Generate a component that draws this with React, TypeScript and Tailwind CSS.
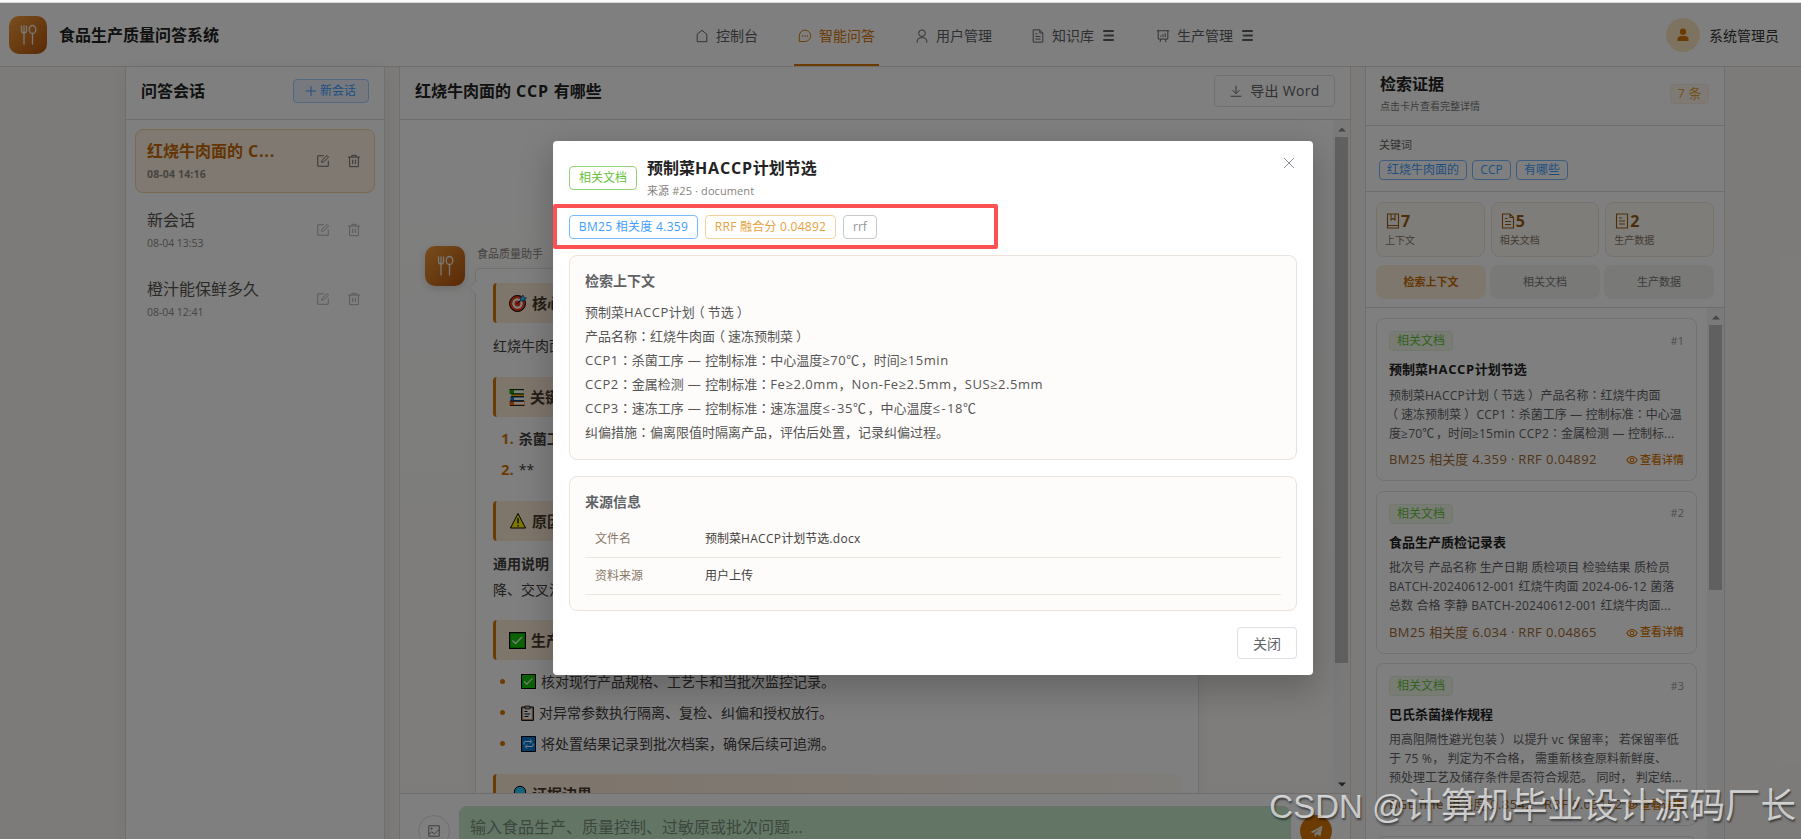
import React from "react";

function Ico({ children, s = 14, c = "" }: { children: React.ReactNode; s?: number; c?: string }) {
  return (
    <svg width={s} height={s} viewBox="0 0 16 16" fill="none" stroke="currentColor" strokeWidth="1.1" className={"shrink-0 " + c}>
      {children}
    </svg>
  );
}

const HouseIcon = () => <Ico><path d="M2.500 14.500V6L8 1.500 13.500 6v8.500z" /></Ico>;
const ChatIcon = () => (
  <Ico><path d="M1.500 14.300V8A6.500 6.500 0 1 1 8 14.300z" /><path d="M4.700 8h1.200M7.400 8h1.200M10.100 8h1.200" strokeWidth="1.500" /></Ico>
);
const UserIcon = () => <Ico><circle cx="8" cy="4.800" r="3.800" /><path d="M2.500 15.500v-2a4 4 0 0 1 4-3.500h3a4 4 0 0 1 4 3.500v2" /></Ico>;
const DocIcon = ({ s = 14 }: { s?: number }) => (
  <Ico s={s}><path d="M2.500 1h7.500l3.500 3.500V15h-11zM10 1v3.500h3.500M5 5.500h2.500M5 8.500h6M5 11.500h6" /></Ico>
);
const ListIcon = ({ s = 14 }: { s?: number }) => (
  <Ico s={s}><path d="M2.500 1h11v14h-11zM5 5h3M5 8h6M5 11h6" /></Ico>
);
const BookIcon = () => <Ico s={16}><path d="M2.500 1h11v14h-11zM2.500 12.500h11M6 1v6l2-1.500L10 7V1" /></Ico>;
const BoardIcon = () => <Ico><path d="M1 2h14M2.500 2v9.500h11V2M5.500 11.500 4.500 15M10.500 11.500l1 3.500M5.500 9V7.500M8 9V6M10.500 9V5" /></Ico>;
const FoldIcon = () => (
  <Ico s={13} c="ml-[1px]"><path d="M1.500 2.500h13M5 8h9.500M1.500 13.500h13" strokeWidth="2.500" /><path d="M1.500 8l3-2v4z" fill="currentColor" stroke="none" /></Ico>
);
const EditIcon = () => <Ico><path d="M9 2H2v12h12V7.500M6.500 9.500l.4-2.200L12.500 1.700l1.800 1.800-5.600 5.600z" /></Ico>;
const TrashIcon = () => <Ico><path d="M1 3.500h14M3 3.500V14.500h10V3.500M5.500 3.500v-2h5v2M6.500 6.500v5M9.500 6.500v5" /></Ico>;
const DownIcon = () => <Ico><path d="M2 14h12M8 2v8.500M4 7l4 4 4-4" /></Ico>;
const EyeIcon = () => <Ico s={12}><path d="M1 8c2-3.300 4.300-4.800 7-4.800S13 4.700 15 8c-2 3.300-4.300 4.800-7 4.800S3 11.300 1 8z" strokeWidth="1.400" /><circle cx="8" cy="8" r="2.400" strokeWidth="1.400" /></Ico>;
const ImageIcon = () => <Ico><path d="M2 2h12v12H2zM2 11.500l3.500-2.500 3 2.500 5.500-5.500" /><circle cx="5.200" cy="5.200" r=".8" /></Ico>;

// Spaces Latin runs and centres full-width colons and brackets in their em box.
function T({ children, k = "tracking-[0.55px]" }: { children: string; k?: string }) {
  return (
    <>
      {children.split(/([：（）℃]|≤-|[\x20-\x7e—≥≤]+)/).map((p, i) => {
        if (p === "：") return <span key={i} className="font-['Noto_Sans_CJK_TC']">{p}</span>;
        if (p === "（") return <span key={i} className="-ml-[3px] mr-[3px]">{p}</span>;
        if (p === "）") return <span key={i} className="mr-[-3px] ml-[3px]">{p}</span>;
        if (p === "℃") return <span key={i} className="mr-[1.500px]">{p}</span>;
        if (p === "≤-") return <span key={i} className="tracking-[1.500px]">{p}</span>;
        if (/^[\x20-\x7e—≥≤]+$/.test(p)) return <span key={i} className={k}>{p}</span>;
        return <React.Fragment key={i}>{p}</React.Fragment>;
      })}
    </>
  );
}

function Utensils() {
  return (
    <svg width="19" height="22" viewBox="0 0 19 22" fill="none" stroke="#f5f0e8" strokeWidth="1.300" strokeLinecap="round">
      <path d="M2.500 2v4.500a2.500 2.500 0 0 0 5 0V2M5 2v18" />
      <ellipse cx="13.500" cy="5.500" rx="3.300" ry="4" />
      <path d="M13.500 9.500V20" />
    </svg>
  );
}

function Target() {
  return (
    <svg width="18" height="18" viewBox="0 0 18 18" className="shrink-0">
      <circle cx="8.500" cy="9.500" r="8" fill="#f03a17" stroke="#000" />
      <circle cx="8.500" cy="9.500" r="5.200" fill="#fff" />
      <circle cx="8.500" cy="9.500" r="3" fill="#f03a17" />
      <path d="M8.500 9.500 12 6" stroke="#000" />
      <path d="m11 7 .5-3L14 1l1 2.500 2.500.5-3 3z" fill="#26c6f5" stroke="#116" strokeWidth=".6" />
    </svg>
  );
}
function Books() {
  return (
    <svg width="16" height="17" viewBox="0 0 16 17" className="shrink-0">
      <path d="M.5.500h14v4.500H.5z" fill="#16a30c" /><path d="M5 1.300h9.500v3H5z" fill="#fff" />
      <path d="M2.500 5h12.500v2.500H2.500z" fill="#ffb900" />
      <path d="M1.500 7.500h13.500V12H1.500z" fill="#0078d7" /><path d="M5 8.500h10v2.500H5z" fill="#fff" />
      <path d="M.5 12h15v4.500H.5z" fill="#f7630c" /><path d="M5 13h10v2.500H5z" fill="#fff" />
      <path d="M.5.500h14.500M2 5h13M2 7.600h13M1 12h14M1 16.500h14.500" stroke="#000" strokeWidth=".8" />
    </svg>
  );
}
function Warn() {
  return (
    <svg width="18" height="18" viewBox="0 0 18 18" className="shrink-0">
      <path d="M9 1.500 16.500 16h-15z" fill="#fff100" stroke="#000" /><path d="M9 6v5.500M9 13v1.500" stroke="#000" strokeWidth="1.300" />
    </svg>
  );
}
function Check({ s = 17 }: { s?: number }) {
  return (
    <svg width={s} height={s} viewBox="0 0 17 17" className="shrink-0">
      <path d="M.6.6h15.800v15.800H.6z" fill="#16c60c" stroke="#000" strokeWidth="1.200" /><path d="m3.500 8.500 3 3L13 5" fill="none" stroke="#fff" strokeWidth="1.300" />
    </svg>
  );
}
function Clip() {
  return (
    <svg width="13" height="16" viewBox="0 0 13 16" className="shrink-0">
      <path d="M.6 2h11.800v13.400H.6z" fill="#d29a72" stroke="#000" /><path d="M2.300 3.500h8.400v10.500H2.300z" fill="#fff" />
      <path d="M4 1h5v3H4z" fill="#aaa" stroke="#000" strokeWidth=".7" /><path d="M3.500 6.500h3M3.500 9h5.500M3.500 11.500h4" stroke="#000" />
    </svg>
  );
}
function Repeat() {
  return (
    <svg width="15" height="16" viewBox="0 0 15 16" className="shrink-0">
      <path d="M.5.500h14v15H.5z" fill="#0078d7" stroke="#000" />
      <path d="M3 8.500V6.500q0-1 1-1h6M9 3.500l2 2-2 2M12 7.500v2q0 1-1 1H5M6 8.500l-2 2 2 2" fill="none" stroke="#fff" />
    </svg>
  );
}
function Magnifier() {
  return (
    <svg width="18" height="18" viewBox="0 0 18 18" className="shrink-0">
      <circle cx="11" cy="7" r="5.700" fill="#26c6f5" stroke="#000" /><path d="m6.500 11.500-5 5" stroke="#000" strokeWidth="2" />
    </svg>
  );
}

function NavItem({ icon, label, c, fold, active }: { icon: React.ReactNode; label: string; c: string; fold?: boolean; active?: boolean }) {
  return (
    <div className={"flex h-[63px] items-center gap-[7px] border-b-2 pt-[4px] text-sm " + c + (active ? " border-[#d97706] px-1 text-[#d97706]" : " border-transparent px-[3px] text-[#5c5f66]")}>
      {icon}
      <span className="leading-none">{label}</span>
      {fold && <FoldIcon />}
    </div>
  );
}

function Session({ title, date, active }: { title: string; date: string; active?: boolean }) {
  return (
    <div className={"mb-[5px] flex h-16 items-center rounded-lg border pr-[13px] pl-[11px] " + (active ? "border-[#f3d3a0] bg-[#fff3e2] font-bold" : "border-transparent")}>
      <div className="flex-1">
        <div className={"text-base leading-[22px] " + (active ? "text-[#c96a05]" : "text-[#57534e]")}><T k={active ? "tracking-[0.8px]" : ""}>{title}</T></div>
        <div className={"mt-[4px] text-[10.500px] leading-4 text-[#8f8a83] " + (active ? "tracking-[0.150px]" : "tracking-[-0.050px]")}>{date}</div>
      </div>
      <div className={"flex gap-[17px] " + (active ? "text-[#666]" : "text-[#b0b0b0]")}>
        <EditIcon />
        <TrashIcon />
      </div>
    </div>
  );
}

function Heading({ icon, children }: { icon: React.ReactNode; children: React.ReactNode }) {
  return (
    <div className="flex h-10 shrink-0 items-center rounded-[4px] border-l-[3px] border-[#d97706] bg-linear-to-r from-[#fdebd6] to-[#fffaf4] pl-[13px] text-[15px] font-bold text-[#4a3b2c]">
      {icon}
      <span className="ml-[5px]">{children}</span>
    </div>
  );
}

function Bullet({ icon, children }: { icon: React.ReactNode; children: React.ReactNode }) {
  return (
    <div className="flex h-[31px] items-center pl-[7px] text-sm text-[#44403c]">
      <span className="size-[5px] rounded-full bg-[#d97706]" />
      <span className="flex items-center gap-[5px] pl-[16px]">{icon}<span>{children}</span></span>
    </div>
  );
}

function Arrow({ up, c }: { up?: boolean; c: string }) {
  return (
    <svg width="8" height="5" viewBox="0 0 8 5" className={c}>
      <path d={up ? "M0 4.500 4 .5l4 4z" : "M0 .5l4 4 4-4z"} fill="currentColor" />
    </svg>
  );
}

function Stat({ icon, n, label }: { icon: React.ReactNode; n: string; label: string }) {
  return (
    <div className="h-[55px] rounded-lg border border-[#efe7d8] bg-[#fdfbf5] px-2 pt-[8px] text-[#9a5b13]">
      <div className="flex h-[20px] items-center text-base font-bold">{icon}<span>{n}</span></div>
      <div className="text-[10px] leading-[19px] text-[#8a7563]">{label}</div>
    </div>
  );
}

function Evidence({ n, title, lines, score }: { n: number; title: string; lines: string[]; score: string }) {
  return (
    <div className="mb-[9.600px] h-[163px] shrink-0 rounded-lg border border-[#e5e2dc] px-[12px] pt-3">
      <div className="flex h-5 items-center justify-between">
        <span className="flex h-5 items-center rounded border border-[#e1f3d8] bg-[#f0f9eb] px-[7px] text-xs text-[#67c23a]">相关文档</span>
        <span className="text-[11px] text-[#999]">#{n}</span>
      </div>
      <div className="mt-[8px] h-5 text-[13px] leading-5 font-bold text-[#222]"><T k="tracking-[0.6px]">{title}</T></div>
      <div className="mt-[6px] text-xs leading-[19px] whitespace-pre text-[#5f6166]">
        {lines.map((l) => <div key={l} className="h-[19px]"><T k="tracking-[0.25px]">{l}</T></div>)}
      </div>
      <div className="mt-[8px] flex h-5 items-center justify-between">
        <span className="text-[13px] text-[#a16a32]"><T k="tracking-[0.4px]">{score}</T></span>
        <span className="flex items-center gap-[2px] text-[11px] font-medium text-[#d97706]"><EyeIcon />查看详情</span>
      </div>
    </div>
  );
}

function Page() {
  return (
    <div className="flex h-[836px] flex-col bg-[#f9f7f3]">
      <header className="flex h-[64px] shrink-0 items-center border-b border-[#e0ddd8] bg-white pl-[9px]">
        <div className="flex size-[38px] items-center justify-center rounded-[10px] bg-linear-to-br from-[#f59e3a] to-[#b45309]"><Utensils /></div>
        <div className="ml-[12px] w-[633px] pt-px text-base font-bold text-[#222]">食品生产质量问答系统</div>
        <NavItem c="" icon={<HouseIcon />} label="控制台" />
        <NavItem c="ml-[33px]" icon={<ChatIcon />} label="智能问答" active />
        <NavItem c="ml-[33px]" icon={<UserIcon />} label="用户管理" />
        <NavItem c="ml-[33px]" icon={<DocIcon />} label="知识库" fold />
        <NavItem c="ml-[35px]" icon={<BoardIcon />} label="生产管理" fold />
        <div className="ml-auto flex size-[34px] items-center justify-center rounded-full bg-[#fde7c3] text-[#d97706]">
          <svg width="12" height="14" viewBox="0 0 12 14" fill="currentColor"><circle cx="6" cy="3.700" r="3.200" /><path d="M.5 13v-2.500a3 3 0 0 1 3-2.500h5a3 3 0 0 1 3 2.500V13z" /></svg>
        </div>
        <div className="mr-[22px] ml-[9px] pt-[2px] text-sm text-[#333]">系统管理员</div>
      </header>

      <div className="flex min-h-0 flex-1 justify-start pl-[125px]">
        <aside className="w-[260px] shrink-0 border-x border-[#e2dfda] bg-white shadow-[0_4px_18px_rgba(60,40,10,0.080)]">
          <div className="flex h-[53px] items-center justify-between border-b border-[#dedbd6] pr-[15px] pb-[4px] pl-[15px]">
            <span className="text-base font-bold text-[#222]">问答会话</span>
            <span className="flex h-6 w-[76px] items-center justify-center gap-[4px] rounded border border-[#a0cfff] bg-[#ecf5ff] text-xs text-[#409eff]">
              <svg width="10" height="10" viewBox="0 0 10 10" stroke="currentColor"><path d="M5 0v10M0 5h10" /></svg>新会话
            </span>
          </div>
          <div className="pt-[9px] pr-[9px] pl-[9px]">
            <Session title="红烧牛肉面的 C..." date="08-04 14:16" active />
            <Session title="新会话" date="08-04 13:53" />
            <Session title="橙汁能保鲜多久" date="08-04 12:41" />
          </div>
        </aside>

        <main className="ml-[14px] flex w-[952px] shrink-0 flex-col border-x border-[#e2dfda] bg-white">
          <div className="flex h-[53px] shrink-0 items-center justify-between border-b border-[#dedbd6] pr-[15px] pb-[4px] pl-[15px]">
            <span className="text-base font-bold text-[#222]"><T k="tracking-[0.8px]">红烧牛肉面的 CCP 有哪些</T></span>
            <span className="flex h-8 w-[121px] items-center justify-center gap-[7px] rounded border border-[#dcdfe6] text-sm text-[#606266]"><DownIcon /><span className="tracking-[0.300px]">导出 Word</span></span>
          </div>
          <div className="flex h-[673px] shrink-0 overflow-hidden">
            <div className="flex flex-1 bg-linear-to-b from-white to-[#fbf9f5] pt-[126px] pl-[25px]">
              <div className="flex size-10 shrink-0 items-center justify-center rounded-[10px] bg-linear-to-br from-[#f09a38] to-[#b45309] shadow-[0_3px_8px_rgba(0,0,0,0.150)]"><Utensils /></div>
              <div className="ml-[10px]">
                <div className="ml-[2px] h-[22px] text-[11px] leading-4 text-[#8b857c]">食品质量助手</div>
                <div className="relative flex h-[600px] w-[724px] flex-col rounded border border-[#e6e2dc] bg-white pt-[14px] pr-[17px] pl-[17px] shadow-[0_4px_14px_rgba(0,0,0,0.050)]">
                  <svg width="9" height="18" viewBox="0 0 9 18" className="absolute top-[10px] left-[-8.500px]"><path d="M9 1 1 8.500l8 8" fill="#fff" stroke="#e6e2dc" /></svg>
                  <Heading icon={<Target />}>核心结论</Heading>
                  <div className="mt-[12px] h-[42px] text-sm leading-[22px] text-[#44403c]">红烧牛肉面的关键控制点如下</div>
                  <Heading icon={<Books />}>关键依据</Heading>
                  <div className="mt-[6px] ml-[8px] h-[31px] text-sm leading-[31px] text-[#44403c]"><b className="mr-[5px] text-[15px] text-[#d97706]">1.</b><b>杀菌工序</b></div>
                  <div className="mb-px ml-[8px] h-[46px] text-sm leading-[31px] text-[#44403c]"><b className="mr-[5px] text-[15px] text-[#d97706]">2.</b>**</div>
                  <Heading icon={<Warn />}>原因分析</Heading>
                  <div className="mt-[10px] h-[69px] text-sm leading-[26px] text-[#44403c]"><div className="font-bold">通用说明</div><div>降、交叉污染</div></div>
                  <Heading icon={<Check />}>生产建议</Heading>
                  <div className="mt-[6px] h-[108px]">
                    <Bullet icon={<Check s={15} />}>核对现行产品规格、工艺卡和当批次监控记录。</Bullet>
                    <Bullet icon={<Clip />}>对异常参数执行隔离、复检、纠偏和授权放行。</Bullet>
                    <Bullet icon={<Repeat />}>将处置结果记录到批次档案，确保后续可追溯。</Bullet>
                  </div>
                  <Heading icon={<Magnifier />}>证据边界</Heading>
                </div>
              </div>
            </div>
            <div className="flex w-[17px] shrink-0 flex-col items-center bg-[#f5f5f5] pt-[7px] text-[#8a8a8a]">
              <Arrow up c="" />
              <div className="mt-[5px] h-[526px] w-[13px] bg-[#c1c1c1]" />
              <Arrow c="mt-auto mb-[6px] text-[#444]" />
            </div>
          </div>
          <div className="flex flex-1 overflow-hidden border-t border-[#dedbd6] pl-[18px]">
            <div className="mt-[21px] flex size-8 shrink-0 items-center justify-center rounded-full border border-[#dcdfe6] text-[#777]"><ImageIcon /></div>
            <div className="mt-[12px] ml-[9px] h-[60px] w-[832px] rounded-lg border border-[#d6dfd2] bg-[#c7edcc] pt-[8px] pl-[10px] text-base leading-6 text-[#78907c]">输入食品生产、质量控制、过敏原或批次问题...</div>
            <div className="mt-[21px] ml-[9px] flex size-8 shrink-0 items-center justify-center rounded-full bg-[#d97706]">
              <svg width="13" height="13" viewBox="0 0 13 13" fill="#f5efe6"><path d="M.5 7 12.500.5 10.500 11 6.500 9.300 5 12.500 4.300 8.700 10 3.500 3.400 8z" /></svg>
            </div>
          </div>
        </main>

        <aside className="ml-[14px] flex w-[360px] shrink-0 flex-col overflow-hidden border-x border-[#e2dfda] bg-white">
          <div className="flex h-[59px] shrink-0 justify-between border-b border-[#dedbd6] pr-[15px] pl-[14px]">
            <div className="pt-[5px]"><div className="text-base leading-6 font-bold text-[#222]">检索证据</div><div className="mt-[2px] text-[10px] leading-4 text-[#777]">点击卡片查看完整详情</div></div>
            <span className="mt-[17px] flex h-5 w-[39px] items-center justify-center rounded border border-[#faecd8] bg-[#fdf6ec] text-[13px] text-[#e6a23c]">7 条</span>
          </div>
          <div className="h-[66px] shrink-0 border-b border-[#dedbd6] pt-[11px] pl-[13px]">
            <div className="text-[11px] leading-4 text-[#666]">关键词</div>
            <div className="mt-[7px] flex gap-[5px] text-xs leading-[18px] text-[#409eff]">
              <span className="rounded border border-[#79bbff] px-[7px]">红烧牛肉面的</span>
              <span className="w-[39px] rounded border border-[#79bbff] text-center">CCP</span>
              <span className="rounded border border-[#79bbff] px-[7px]">有哪些</span>
            </div>
          </div>
          <div className="h-[116px] shrink-0 border-b border-[#dedbd6] pt-[10px] pr-[10px] pl-[10px]">
            <div className="grid grid-cols-3 gap-[6px]">
              <Stat icon={<BookIcon />} n="7" label="上下文" />
              <Stat icon={<DocIcon s={16} />} n="5" label="相关文档" />
              <Stat icon={<ListIcon s={16} />} n="2" label="生产数据" />
            </div>
            <div className="mt-2 grid grid-cols-3 gap-1 text-center text-[11px] leading-[34px] text-[#777]">
              <span className="rounded-lg bg-[#fdeeda] font-bold text-[#c96a05]">检索上下文</span>
              <span className="rounded-lg bg-[#f3f2f0]">相关文档</span>
              <span className="rounded-lg bg-[#f3f2f0]">生产数据</span>
            </div>
          </div>
          <div className="flex min-h-0 flex-1">
            <div className="flex min-h-0 flex-1 flex-col overflow-hidden pt-[10px] pr-[10px] pl-[10px]">
              <Evidence n={1} title="预制菜HACCP计划节选" score="BM25 相关度 4.359 · RRF 0.04892" lines={["预制菜HACCP计划（节选） 产品名称：红烧牛肉面", "（速冻预制菜） CCP1：杀菌工序 — 控制标准：中心温", "度≥70℃，时间≥15min CCP2：金属检测 — 控制标..."]} />
              <Evidence n={2} title="食品生产质检记录表" score="BM25 相关度 6.034 · RRF 0.04865" lines={["批次号 产品名称 生产日期 质检项目 检验结果 质检员", "BATCH-20240612-001 红烧牛肉面 2024-06-12 菌落", "总数 合格 李静 BATCH-20240612-001 红烧牛肉面..."]} />
              <Evidence n={3} title="巴氏杀菌操作规程" score="BGE fine 相关度 0.8542 · RRF 0.03152" lines={["用高阻隔性避光包装） 以提升 vc 保留率； 若保留率低", "于 75 %， 判定为不合格， 需重新核查原料新鲜度、", "预处理工艺及储存条件是否符合规范。 同时， 判定结..."]} />
              <div className="h-[163px] shrink-0 rounded-lg border border-[#e5e2dc]" />
            </div>
            <div className="flex w-[17px] shrink-0 flex-col items-center bg-[#f5f5f5] pt-[7px] text-[#8a8a8a]">
              <Arrow up c="" />
              <div className="mt-[5px] h-[265px] w-[13px] bg-[#c1c1c1]" />
            </div>
          </div>
        </aside>
      </div>
    </div>
  );
}

function Tag({ c, children }: { c: string; children: React.ReactNode }) {
  return <span className={"flex h-6 shrink-0 items-center justify-center rounded border bg-white text-xs whitespace-pre " + c}>{children}</span>;
}

function Dialog() {
  return (
    <div className="absolute top-[141px] left-[553px] h-[534px] w-[760px] rounded bg-white px-4 shadow-[0_12px_32px_4px_rgba(0,0,0,0.200)]">
      <svg width="10" height="10" viewBox="0 0 10 10" className="absolute top-[17px] right-[19px]" stroke="#909399"><path d="m0 0 10 10M10 0 0 10" /></svg>
      <div className="flex pt-[15px]">
        <Tag c="mt-[10px] w-[68px] border-[#95d475] text-[#67c23a]">相关文档</Tag>
        <div className="ml-[10px]">
          <div className="text-base leading-6 font-bold text-[#222]"><T k="tracking-[0.8px]">预制菜HACCP计划节选</T></div>
          <div className="mt-[3px] text-[11px] leading-4 tracking-[0.100px] text-[#85827d]">来源 #25 · document</div>
        </div>
      </div>
      <div className="mt-4 flex gap-[7px]">
        <Tag c="w-[129px] border-[#79bbff] text-[#409eff] tracking-[0.300px]">BM25 相关度 4.359</Tag>
        <Tag c="w-[131px] border-[#f3d19e] text-[#e6a23c] tracking-[0.250px]">RRF 融合分 0.04892</Tag>
        <Tag c="w-[34px] border-[#c8c9cc] text-[#909399]">rrf</Tag>
      </div>
      <div className="absolute top-[63px] left-0 h-[45px] w-[445px] rounded-[2px] border-4 border-[#fd5153]" />
      <section className="mt-4 h-[205px] rounded-lg border border-[#e8e3dc] bg-[#fdfcfa] px-[15px] pt-[14px]">
        <div className="text-sm leading-[22px] font-bold text-[#606266]">检索上下文</div>
        <div className="mt-2 text-[13px] leading-6 text-[#555]">
          <div className="h-6"><T>预制菜HACCP计划（节选）</T></div>
          <div className="h-6"><T>产品名称：红烧牛肉面（速冻预制菜）</T></div>
          <div className="h-6"><T>CCP1：杀菌工序 — 控制标准：中心温度≥70℃，时间≥15min</T></div>
          <div className="h-6"><T>CCP2：金属检测 — 控制标准：Fe≥2.0mm，Non-Fe≥2.5mm，SUS≥2.5mm</T></div>
          <div className="h-6"><T>CCP3：速冻工序 — 控制标准：速冻温度≤-35℃，中心温度≤-18℃</T></div>
          <div className="h-6"><T>纠偏措施：偏离限值时隔离产品，评估后处置，记录纠偏过程。</T></div>
        </div>
      </section>
      <section className="mt-4 h-[135px] rounded-lg border border-[#e8e3dc] bg-[#fdfcfa] px-[15px] pt-[14px]">
        <div className="text-sm leading-[22px] font-bold text-[#606266]">来源信息</div>
        <div className="mt-[8px] flex h-[37px] items-center border-b border-[#ebe8e0] px-[10px] text-xs"><span className="w-[110px] text-[#8a7866]">文件名</span><span className="text-[#44403c]"><T k="tracking-[0.3px]">预制菜HACCP计划节选.docx</T></span></div>
        <div className="flex h-[37px] items-center border-b border-[#ebe8e0] px-[10px] text-xs"><span className="w-[110px] text-[#8a7866]">资料来源</span><span className="text-[#44403c]">用户上传</span></div>
      </section>
      <div className="mt-4 flex justify-end"><span className="flex h-8 w-[60px] items-center justify-center rounded border border-[#dcdfe6] pt-px text-sm text-[#606266]">关闭</span></div>
    </div>
  );
}

export default function App() {
  return (
    <div className="relative h-[839px] w-[1801px] overflow-hidden bg-white font-['Open_Sans','Noto_Sans_CJK_SC',sans-serif]">
      <div className="h-[3px] border-b border-[#d8d8d8] bg-[#fafafa]" />
      <Page />
      <div className="absolute top-[3px] left-0 h-[836px] w-[1801px] bg-black/50" />
      <Dialog />
      <div className="absolute right-[5px] bottom-[9px] flex items-baseline leading-[46px] whitespace-pre text-white/70 [text-shadow:1px_2px_2px_rgba(0,0,0,0.500)]">
        <span className="font-['Liberation_Sans'] text-[33px]">CSDN @</span>
        <span className="text-[35.500px]">计算机毕业设计源码厂长</span>
      </div>
    </div>
  );
}
